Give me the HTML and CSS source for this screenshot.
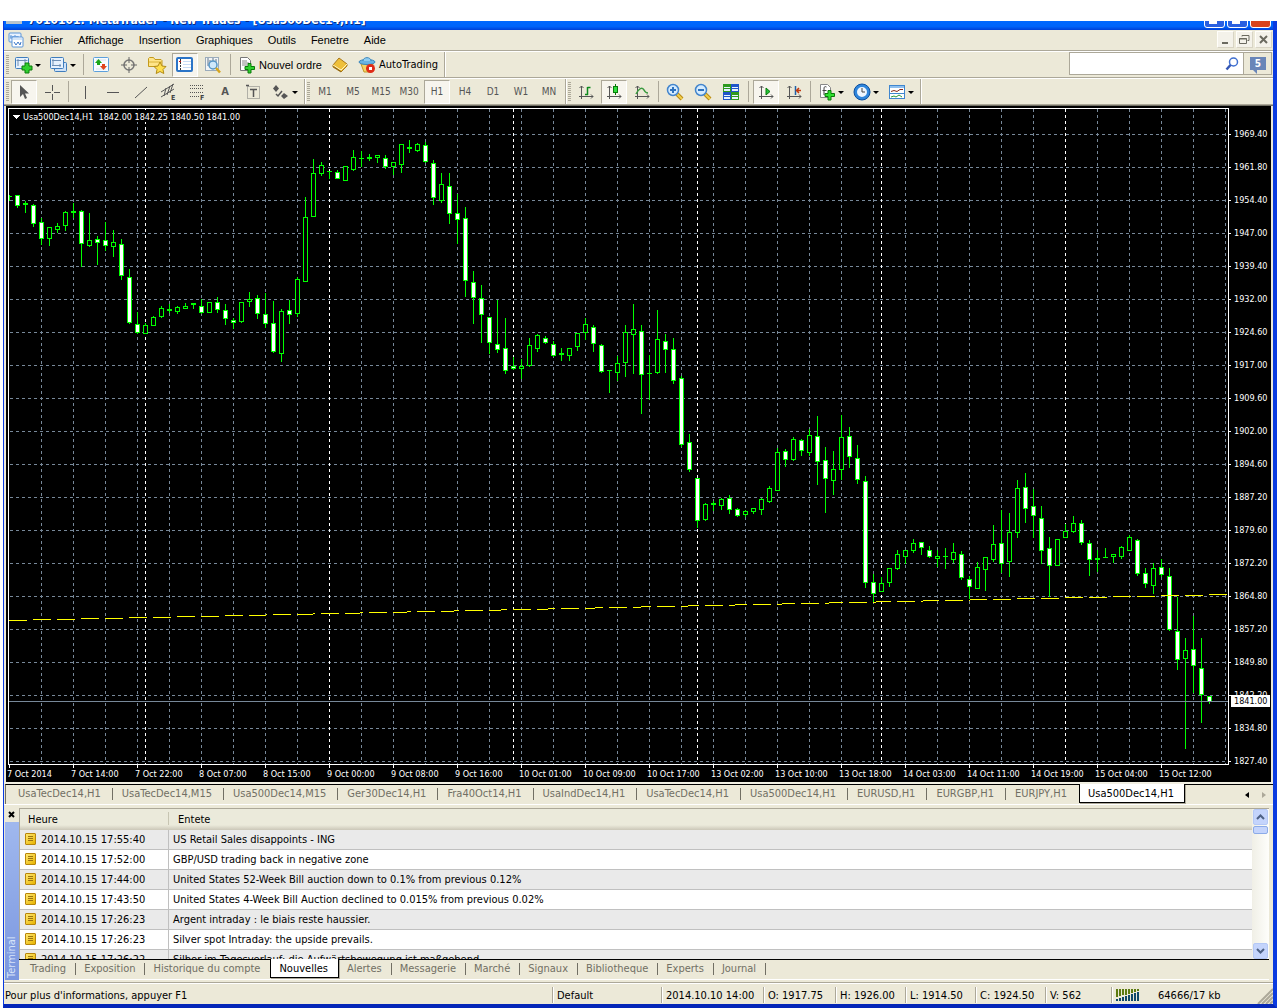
FILE: index.html
```
<!DOCTYPE html>
<html lang="fr">
<head>
    <meta charset="UTF-8">
    <meta name="viewport" content="width=device-width, initial-scale=1.0">
    <title>MetaTrader - [Usa500Dec14,H1]</title>
    <link rel="stylesheet" href="styles.css">
</head>
<body>

<div class="window">
    <header class="titlebar">
        <span class="app-icon"></span>
        <span class="title-text">7010101: MetaTrader - New Trades - [Usa500Dec14,H1]</span>
        <button class="win-btn" aria-label="Réduire"><i></i></button>
        <button class="win-btn" aria-label="Agrandir"><i></i></button>
        <button class="win-btn close" aria-label="Fermer">X</button>
    </header>

    <nav class="menubar">
        <svg class="menu-icon" width="16" height="16" viewBox="0 0 16 16"><rect x="1" y="1" width="12" height="9" rx="1" fill="#e8f2ff" stroke="#5b95d8"/><path d="M3 3v4M5 4v4M7 3v3M9 4v4M2 5h9" stroke="#5b95d8" fill="none"/><rect x="4" y="5" width="11" height="10" rx="1" fill="#fff" stroke="#5b95d8"/><path d="M4 7h11" stroke="#a9cbf2"/><path d="M6 10l2 3 2-3 2 3 1-3" stroke="#3c78c8" fill="none"/></svg>
        <a href="#">Fichier</a>
        <a href="#">Affichage</a>
        <a href="#">Insertion</a>
        <a href="#">Graphiques</a>
        <a href="#">Outils</a>
        <a href="#">Fenetre</a>
        <a href="#">Aide</a>
        <div class="mdi">
            <button aria-label="Réduire"><svg width="16" height="16" viewBox="0 0 16 16"><path d="M5 11h6" stroke="#6b6a60" stroke-width="2"/></svg></button>
            <button aria-label="Restaurer"><svg width="16" height="16" viewBox="0 0 16 16"><path d="M6 4.500V3.500h7v5h-1.500M6 3.500h7" stroke="#6b6a60" fill="none"/><path d="M3.500 6.500h7v5h-7zM3 7h8" stroke="#6b6a60" fill="none"/></svg></button>
            <button aria-label="Fermer"><svg width="16" height="16" viewBox="0 0 16 16"><path d="M5 4l7 7M12 4l-7 7" stroke="#6b6a60" stroke-width="2"/></svg></button>
        </div>
    </nav>

    <div class="toolrow">
        <div class="toolbar">
            <button class="tool drop" aria-label="Nouveau graphique"><svg width="20" height="18" viewBox="0 0 20 18"><rect x="1.500" y="1.500" width="13" height="11" rx="1" fill="#e6f1fd" stroke="#3f7dbd"/><path d="M4 3v7M2.500 4.500h11M11 3v4" stroke="#6f8fb4" fill="none"/><path d="M11 7h4v3h3v4h-3v3h-4v-3H8v-4h3z" fill="#2fd02f" stroke="#0a7a0a"/></svg></button>
            <button class="tool drop" aria-label="Profils"><svg width="20" height="18" viewBox="0 0 20 18"><rect x="5.500" y="6.500" width="12" height="9" rx="1" fill="#cfe2f7" stroke="#3f7dbd"/><rect x="1.500" y="1.500" width="13" height="11" rx="1" fill="#e6f1fd" stroke="#3f7dbd"/><path d="M4 3v7M3 4.500h9M3 9.500h9M11 8v3" stroke="#6f8fb4" fill="none"/></svg></button>
            <span class="sep"></span>
            <button class="tool" aria-label="Cotations"><svg width="18" height="18" viewBox="0 0 18 18"><rect x="1.500" y="1.500" width="15" height="14" rx="1" fill="#f7fbff" stroke="#5ca0dc"/><path d="M4 4h10M4 13h10" stroke="#d7e2ee"/><path d="M6.500 3l3.500 4H8v2H5V7H3z" fill="#19a519"/><path d="M11.500 14l-3.500-4h2V8h3v2h2z" fill="#e0441c"/></svg></button>
            <button class="tool" aria-label="Viseur"><svg width="18" height="18" viewBox="0 0 18 18"><circle cx="9" cy="9" r="5" fill="none" stroke="#777" stroke-width="1.500"/><path d="M9 1v6M9 11v6M1 9h6M11 9h6" stroke="#666"/></svg></button>
            <button class="tool" aria-label="Navigateur"><svg width="20" height="18" viewBox="0 0 20 18"><path d="M1.500 10.500v-8l1-1h4l1.500 2h6l1 1v6z" fill="#ffe58a" stroke="#c39a1c"/><path d="M2 6h13" stroke="#d8b239"/><path d="M13 6l2 4 4 .5-3 3 .8 4L13 15.500 9.200 17.500l.8-4-3-3 4-.5z" fill="#ffdf4f" stroke="#b28a14"/></svg></button>
            <button class="tool pressed" aria-label="Terminal"><svg width="18" height="16" viewBox="0 0 18 16"><rect x="1" y="1" width="15" height="13" rx="1" fill="#fff" stroke="#2b74c7" stroke-width="2"/><path d="M4.500 2v11" stroke="#333" stroke-dasharray="2 1"/><path d="M7 4.500h8M7 7.500h8M7 10.500h8" stroke="#c6dbf5"/><path d="M3 4.500h2" stroke="#d11"/></svg></button>
            <button class="tool" aria-label="Testeur"><svg width="18" height="18" viewBox="0 0 18 18"><rect x="1.500" y="1.500" width="13" height="13" fill="#f3f5f7" stroke="#9aabbb"/><path d="M4 2v8M6 4v7M12 3v6M9 2v4" stroke="#61768b"/><circle cx="9" cy="9" r="4" fill="#cfe8fb" stroke="#5695c6" stroke-width="1.500"/><path d="M12 12l4 4.500" stroke="#d6a51e" stroke-width="2.500"/></svg></button>
            <span class="sep"></span>
            <button class="tool labelled order"><svg width="18" height="18" viewBox="0 0 18 18"><path d="M2.500 1.500h7l3 3v10h-10z" fill="#fff" stroke="#777"/><path d="M4 5h5M4 7h7M4 9h5" stroke="#888"/><path d="M10 7.500h3v3h3.500v3H13v3.500h-3v-3.500H7v-3h3z" fill="#2fd02f" stroke="#0a7a0a"/></svg>Nouvel ordre</button>
            <button class="tool" aria-label="MetaEditor"><svg width="18" height="18" viewBox="0 0 18 18"><path d="M2 9l6-7 8 6v2l-6 6-8-5z" fill="#eebf3a" stroke="#a9781a"/><path d="M2 9l8 5 6-6" stroke="#fff3c0" fill="none"/><path d="M2.500 10.500l7.500 5" stroke="#8a6416"/></svg></button>
            <button class="tool labelled"><svg width="18" height="18" viewBox="0 0 18 18"><path d="M3 8h12l-3 8H6z" fill="#f4d264" stroke="#c29a2a"/><ellipse cx="9" cy="6" rx="8" ry="2.500" fill="#69b3e2" stroke="#3a86bb"/><path d="M5 5c0-4.500 8-4.500 8 0" fill="#8fcdf2" stroke="#3a86bb"/><circle cx="12.500" cy="12.500" r="4.500" fill="#df2b18"/><rect x="11" y="11" width="3" height="3" fill="#fff"/></svg>AutoTrading</button>
        </div>
        <div class="search">
            <input type="text" aria-label="Recherche">
            <svg width="14" height="14" viewBox="0 0 14 14"><circle cx="8.500" cy="5" r="4" fill="#fff" stroke="#3f6fd0" stroke-width="1.500"/><path d="M5.500 8L1.500 12.500" stroke="#3457b5" stroke-width="2.500"/></svg>
        </div>
        <button class="alerts" aria-label="5 messages"><span>5</span></button>
    </div>

    <div class="toolrow second">
        <div class="toolbar">
            <button class="tool pressed" aria-label="Curseur"><svg width="16" height="16" viewBox="0 0 16 16"><path d="M4 1v12l3-3 2 5 2-1-2-4.500h4z" fill="#555"/></svg></button>
            <button class="tool" aria-label="Réticule"><svg width="16" height="16" viewBox="0 0 16 16"><path d="M8.500 1v6M8.500 10v6M1 8.500h6M10 8.500h6" stroke="#555"/></svg></button>
            <span class="sep near"></span>
            <button class="tool" aria-label="Ligne verticale"><svg width="16" height="16" viewBox="0 0 16 16"><path d="M8.500 2v13" stroke="#555"/></svg></button>
            <button class="tool" aria-label="Ligne horizontale"><svg width="16" height="16" viewBox="0 0 16 16"><path d="M2 8.500h12" stroke="#555"/></svg></button>
            <button class="tool" aria-label="Ligne de tendance"><svg width="16" height="16" viewBox="0 0 16 16"><path d="M2 14L14 3" stroke="#555"/></svg></button>
            <button class="tool" aria-label="Canal équidistant"><svg width="18" height="18" viewBox="0 0 18 18"><path d="M1 9L14 1M1 14L14 6M4 13l2-8M7 12l3-9M10 10l3-9" stroke="#555" fill="none"/><text x="11" y="17" class="icon-letter">E</text></svg></button>
            <button class="tool" aria-label="Fibonacci"><svg width="18" height="18" viewBox="0 0 18 18"><path d="M2 2.500h14M2 5.500h14M2 9.500h14M2 13.500h9" stroke="#555" stroke-dasharray="1 1"/><text x="12" y="17" class="icon-letter">F</text></svg></button>
            <button class="tool glyph">A</button>
            <button class="tool" aria-label="Etiquette"><svg width="16" height="16" viewBox="0 0 16 16"><rect x="2.500" y="2.500" width="12" height="12" fill="none" stroke="#777" stroke-dasharray="1 1"/><path d="M5 5.500h7M8.500 5v8M1 1.500h3" stroke="#555" stroke-width="1.500"/></svg></button>
            <button class="tool drop" aria-label="Flèches"><svg width="18" height="16" viewBox="0 0 18 16"><path d="M4 1l3 3.500-3 3.500-3-3.500zM12 9l4 3-4 3-3-3z" fill="#555"/><path d="M4 10l2 2 4-5" stroke="#555" fill="none" stroke-width="1.500"/></svg></button>
        </div>
        <div class="toolbar">
            <button class="tool period">M1</button>
            <button class="tool period">M5</button>
            <button class="tool period">M15</button>
            <button class="tool period">M30</button>
            <button class="tool period pressed">H1</button>
            <button class="tool period">H4</button>
            <button class="tool period">D1</button>
            <button class="tool period">W1</button>
            <button class="tool period">MN</button>
        </div>
        <div class="toolbar">
            <button class="tool" aria-label="Barres"><svg width="16" height="16" viewBox="0 0 16 16"><path d="M3.500 2v13M1 12.500h14M1.500 4l2-2 2 2M13 10.500l2 2-2 2" stroke="#555" fill="none"/><path d="M9.500 3v8M9.500 3.500h3M7 10.500h3" stroke="#0d8a1c" stroke-width="1.500" fill="none"/></svg></button>
            <button class="tool pressed" aria-label="Chandeliers"><svg width="16" height="16" viewBox="0 0 16 16"><path d="M3.500 2v13M1 12.500h14M1.500 4l2-2 2 2M13 10.500l2 2-2 2" stroke="#555" fill="none"/><path d="M9.500 0v11" stroke="#0a7a0a"/><rect x="7.500" y="2.500" width="4" height="6" fill="#2fdf3f" stroke="#0a7a0a"/></svg></button>
            <button class="tool" aria-label="Ligne"><svg width="16" height="16" viewBox="0 0 16 16"><path d="M3.500 2v13M1 12.500h14M1.500 4l2-2 2 2M13 10.500l2 2-2 2" stroke="#555" fill="none"/><path d="M2 10c3-6 6-7 8-4 1 2 3 3 4 3" stroke="#3a9a3f" stroke-width="1.500" fill="none"/></svg></button>
            <span class="sep near"></span>
            <button class="tool" aria-label="Zoom avant"><svg width="18" height="18" viewBox="0 0 18 18"><path d="M11 11l5 5" stroke="#b98a12" stroke-width="4"/><path d="M11 11l5 5" stroke="#f2cf4c" stroke-width="2"/><circle cx="7" cy="7" r="5.500" fill="#d5ecff" stroke="#4385cc" stroke-width="1.500"/><path d="M4 7h6M7 4v6" stroke="#2e73bf" stroke-width="2"/></svg></button>
            <button class="tool" aria-label="Zoom arrière"><svg width="18" height="18" viewBox="0 0 18 18"><path d="M11 11l5 5" stroke="#b98a12" stroke-width="4"/><path d="M11 11l5 5" stroke="#f2cf4c" stroke-width="2"/><circle cx="7" cy="7" r="5.500" fill="#d5ecff" stroke="#4385cc" stroke-width="1.500"/><path d="M4 7h6" stroke="#2e73bf" stroke-width="2"/></svg></button>
            <button class="tool" aria-label="Mosaïque"><svg width="18" height="18" viewBox="0 0 18 18"><path d="M1 1h8v8H1zM9 9h8v8H9z" fill="#2f9a1d"/><path d="M9 1h8v8H9zM1 9h8v8H1z" fill="#1f55c9"/><path d="M2 4h6v1H2zM2 6h6v2H2zM10 4h6v1h-6zM10 6h6v2h-6zM2 12h6v1H2zM2 14h6v2H2zM10 12h6v1h-6zM10 14h6v2h-6z" fill="#e7f3ff"/></svg></button>
            <span class="sep"></span>
            <button class="tool pressed" aria-label="Défilement"><svg width="16" height="16" viewBox="0 0 16 16"><path d="M3.500 2v13M1 12.500h14M1.500 4l2-2 2 2M13 10.500l2 2-2 2" stroke="#555" fill="none"/><path d="M8 4l4 3.500L8 11z" fill="#22c43a" stroke="#0a7a0a"/></svg></button>
            <button class="tool" aria-label="Décalage"><svg width="16" height="16" viewBox="0 0 16 16"><path d="M3.500 2v13M1 12.500h14M1.500 4l2-2 2 2M13 10.500l2 2-2 2" stroke="#555" fill="none"/><path d="M9.500 2v9" stroke="#1f62a8" stroke-width="1.500"/><path d="M15 6.500h-4M13 4l-2.500 2.500L13 9" stroke="#c23a10" stroke-width="1.500" fill="none"/></svg></button>
            <span class="sep near"></span>
            <button class="tool drop" aria-label="Indicateurs"><svg width="18" height="18" viewBox="0 0 18 18"><path d="M2.500 1.500h7l3 3v10h-10z" fill="#fff" stroke="#888"/><path d="M8.500 4c-2-1-2.500 0-2.500 2v6M4.500 7.500h4" stroke="#444" fill="none"/><path d="M10 7.500h3v3h3.500v3H13v3.500h-3v-3.500H7v-3h3z" fill="#2fe02f" stroke="#0a7a0a"/></svg></button>
            <button class="tool drop" aria-label="Périodes"><svg width="18" height="18" viewBox="0 0 18 18"><circle cx="9" cy="9" r="6.500" fill="#eef6ff" stroke="#2f86dc" stroke-width="3"/><circle cx="9" cy="9" r="8" fill="none" stroke="#0d4f9f"/><path d="M9 5v4h3" stroke="#444" fill="none"/></svg></button>
            <button class="tool drop" aria-label="Modèles"><svg width="18" height="16" viewBox="0 0 18 16"><rect x="1.500" y="1.500" width="15" height="13" fill="#fff" stroke="#3f86cf"/><path d="M2 3h14" stroke="#8fc0ef" stroke-width="2"/><path d="M2 9.500h14" stroke="#3f86cf"/><path d="M3 7.500l3-1 3 1 3-2h3" stroke="#8a2a1a" fill="none"/><path d="M3 13l3-1 2 1 3-2 3 2" stroke="#2c9a3a" fill="none"/></svg></button>
        </div>
    </div>

    <main class="chart">
        <svg id="chart" viewBox="6 106 1265 676" role="img" aria-label="Usa500Dec14,H1"></svg>
    </main>

    <nav class="chart-tabs">
        <a href="#">UsaTecDec14,H1</a>
        <a href="#">UsaTecDec14,M15</a>
        <a href="#">Usa500Dec14,M15</a>
        <a href="#">Ger30Dec14,H1</a>
        <a href="#">Fra40Oct14,H1</a>
        <a href="#">UsaIndDec14,H1</a>
        <a href="#">UsaTecDec14,H1</a>
        <a href="#">Usa500Dec14,H1</a>
        <a href="#">EURUSD,H1</a>
        <a href="#">EURGBP,H1</a>
        <a href="#" class="before">EURJPY,H1</a>
        <a href="#" class="active">Usa500Dec14,H1</a>
        <span class="tab-arrows">
            <button class="arrow-left" aria-label="Précédent"></button>
            <button class="arrow-right" aria-label="Suivant"></button>
        </span>
    </nav>

    <section class="terminal">
        <aside class="terminal-side">
            <button aria-label="Fermer"><svg width="7" height="7" viewBox="0 0 7 7"><path d="M1 1l5 5M6 1L1 6" stroke="#000" stroke-width="2"/></svg></button>
            <div class="terminal-name">Terminal</div>
        </aside>
        <div class="terminal-main">
            <div class="news">
                <div class="news-list">
                    <table>
                        <thead>
                            <tr><th class="col-time">Heure</th><th>Entete</th></tr>
                        </thead>
                        <tbody>
                            <tr><td><i class="note"></i>2014.10.15 17:55:40</td><td>US Retail Sales disappoints - ING</td></tr>
                            <tr><td><i class="note"></i>2014.10.15 17:52:00</td><td>GBP/USD trading back in negative zone</td></tr>
                            <tr><td><i class="note"></i>2014.10.15 17:44:00</td><td>United States 52-Week Bill auction down to 0.1% from previous 0.12%</td></tr>
                            <tr><td><i class="note"></i>2014.10.15 17:43:50</td><td>United States 4-Week Bill Auction declined to 0.015% from previous 0.02%</td></tr>
                            <tr><td><i class="note"></i>2014.10.15 17:26:23</td><td>Argent intraday : le biais reste haussier.</td></tr>
                            <tr><td><i class="note"></i>2014.10.15 17:26:23</td><td>Silver spot Intraday: the upside prevails.</td></tr>
                            <tr><td><i class="note"></i>2014.10.15 17:26:22</td><td>Silber im Tagesverlauf: die Aufwärtsbewegung ist maßgebend</td></tr>
                        </tbody>
                    </table>
                </div>
                <div class="scrollbar">
                    <button aria-label="Haut"><svg width="9" height="6" viewBox="0 0 9 6"><path d="M1 5l3.500-3.500L8 5" stroke="#4d6185" stroke-width="2" fill="none"/></svg></button>
                    <span class="thumb"></span>
                    <button class="down" aria-label="Bas"><svg width="9" height="6" viewBox="0 0 9 6"><path d="M1 1l3.500 3.500L8 1" stroke="#4d6185" stroke-width="2" fill="none"/></svg></button>
                </div>
            </div>
            <nav class="terminal-tabs">
                <a href="#">Trading</a>
                <a href="#">Exposition</a>
                <a href="#" class="before">Historique du compte</a>
                <a href="#" class="active">Nouvelles</a>
                <a href="#">Alertes</a>
                <a href="#">Messagerie</a>
                <a href="#">Marché</a>
                <a href="#">Signaux</a>
                <a href="#">Bibliotheque</a>
                <a href="#">Experts</a>
                <a href="#">Journal</a>
            </nav>
        </div>
    </section>

    <footer class="statusbar">
        <span class="hint">Pour plus d'informations, appuyer F1</span>
        <span class="profile">Default</span>
        <span class="date">2014.10.10 14:00</span>
        <span class="open">O: 1917.75</span>
        <span class="price">H: 1926.00</span>
        <span class="price">L: 1914.50</span>
        <span class="price">C: 1924.50</span>
        <span class="volume">V: 562</span>
        <span class="traffic">
            <svg width="24" height="12" viewBox="0 0 24 12"><path d="M1 0v8M4 0v7M7 0v6M10 0v6M13 0v5M16 0v4M19 0v3M22 0v2" stroke="#5c7a10" stroke-width="2"/><path d="M1 10v2M4 9v3M7 8v4M10 7v5M13 6v6M16 5v7M19 4v8M22 3v9" stroke="#10486a" stroke-width="2"/></svg>
            64666/17 kb
        </span>
        <svg class="resize" width="16" height="16" viewBox="0 0 16 16"><path d="M1 16L16 1M5 16L16 5M9 16L16 9M13 16l3-3" stroke="#aca899" stroke-width="2"/></svg>
    </footer>
</div>

<script src="chart.js"></script>
</body>
</html>
```
FILE: styles.css
```
* {
    box-sizing: border-box;
}
body {
    margin: 0;
    padding: 21px 0 0 3px;
    height: 100vh;
    background: #fff;
    color: #000;
    font-family: "DejaVu Sans Condensed", "Liberation Sans", sans-serif;
    font-size: 11px;
}
button {
    margin: 0;
    padding: 0;
    border: 0;
    background: none;
    color: inherit;
    font: inherit;
}
a {
    color: inherit;
    text-decoration: none;
}
svg {
    display: block;
    flex: none;
}
.window {
    display: flex;
    flex-direction: column;
    height: 100%;
    background: #ece9d8;
    border: solid #0a3be0;
    border-width: 0 4px 4px 1px;
    border-bottom-color: #0426b8;
}

/* title bar */
.titlebar {
    display: flex;
    align-items: flex-end;
    height: 9px;
    padding: 0 2px 2px 2px;
    overflow: hidden;
    background: linear-gradient(#0068ff 0, #0064fa 60%, #0040d8);
    color: #fff;
    flex: none;
}
.app-icon {
    width: 16px;
    height: 7px;
    margin-right: 6px;
    background: linear-gradient(#b8c4cc 3px, transparent 3px);
}
.title-text {
    flex: 1;
    font: bold 12px/16px "DejaVu Sans Condensed", sans-serif;
    text-shadow: 1px 1px #0a2a80;
    white-space: nowrap;
}
.win-btn {
    width: 21px;
    height: 21px;
    margin-left: 2px;
    border: 1px solid #fff;
    border-radius: 3px;
    background: #2a60e0;
    color: #fff;
    font-weight: bold;
}
.win-btn i {
    display: block;
    width: 8px;
    height: 3px;
    margin: 10px 0 0 4px;
    background: #fff;
}
.win-btn.close {
    background: #d8431c;
}

/* menu */
.menubar {
    display: flex;
    align-items: center;
    height: 21px;
    padding: 0 1px 1px 4px;
    border-bottom: 1px solid #aca899;
    font-family: "Liberation Sans", sans-serif;
    flex: none;
}
.menu-icon {
    margin-right: 6px;
}
.menubar a {
    margin-right: 15px;
}
.mdi {
    display: flex;
    gap: 2px;
    margin-left: auto;
}
.mdi button {
    width: 17px;
    height: 17px;
    background: #f4f2ea;
    border: 1px solid #fffefa;
    border-right-color: #d8d4c4;
    border-bottom-color: #d8d4c4;
}
.mdi svg {
    margin: -1px;
}

/* toolbars */
.toolrow {
    display: flex;
    height: 27px;
    border-top: 1px solid #fff;
    border-bottom: 1px solid #aca899;
    flex: none;
}
.toolbar {
    display: flex;
    align-items: center;
    padding: 0 2px;
    border-right: 1px solid #aca899;
    box-shadow: 1px 0 #fff;
}
.toolbar::before {
    content: "";
    width: 3px;
    height: 19px;
    margin-right: 1px;
    background: repeating-linear-gradient(#aca899 0 1px, #ece9d8 1px 2px);
}
.tool {
    position: relative;
    display: flex;
    align-items: center;
    justify-content: center;
    width: 26px;
    height: 24px;
    margin: 0 1px;
}
.tool.drop {
    width: 33px;
    padding-right: 8px;
}
.tool.drop::after {
    content: "";
    position: absolute;
    right: 3px;
    top: 11px;
    border: solid transparent;
    border-width: 3px 3px 0;
    border-top-color: #000;
}
.tool.pressed {
    background: #f7f5ee;
    border: 1px solid #aca899;
    border-right-color: #fff;
    border-bottom-color: #fff;
}
.tool.labelled {
    width: auto;
    gap: 3px;
    padding: 0 3px;
    white-space: nowrap;
}
.tool.order {
    font-family: "Liberation Sans", sans-serif;
}
.tool.glyph {
    color: #555;
    font-weight: bold;
}
.tool.period {
    color: #555;
    font-size: 10px;
}
.icon-letter {
    font: bold 7px "DejaVu Sans Condensed", sans-serif;
    fill: #444;
}
.sep {
    width: 1px;
    height: 21px;
    margin: 0 3px;
    background: #aca899;
}
.sep.near {
    margin: 0 2px;
}
.search {
    display: flex;
    align-items: center;
    width: 175px;
    height: 23px;
    margin-left: auto;
    padding-right: 4px;
    border: 1px solid #aca899;
    background: #fff;
}
.search input {
    flex: 1;
    min-width: 0;
    border: 0;
    outline: 0;
}
.alerts {
    width: 29px;
    height: 23px;
    margin: 0 1px 0 -1px;
    padding: 0 6px;
    border: 1px solid #aca899;
}
.alerts span {
    position: relative;
    display: block;
    width: 16px;
    height: 13px;
    background: #6a86b8;
    color: #fff;
    font: bold 10px/13px "DejaVu Sans Condensed", sans-serif;
}
.alerts span::after {
    content: "";
    position: absolute;
    left: 3px;
    top: 13px;
    border-left: 4px solid transparent;
    border-top: 4px solid #6a86b8;
}

/* chart */
.chart {
    padding: 0 2px;
    border-top: 1px solid #716f64;
    border-bottom: 2px solid #f1efe2;
    flex: none;
}
.chart svg {
    width: 100%;
    height: auto;
    background: #000;
    shape-rendering: crispEdges;
}
.chart text {
    font-family: "DejaVu Sans Condensed", sans-serif;
    font-size: 9px;
    fill: #fff;
}
.chart .caption {
    white-space: pre;
}
.chart .last {
    fill: #000;
}

/* chart tabs and terminal tabs */
.chart-tabs,
.terminal-tabs {
    display: flex;
    height: 20px;
    border-top: 1px solid #000;
    color: #716f64;
    white-space: nowrap;
    flex: none;
}
.chart-tabs {
    margin-left: 1px;
    padding-left: 3px;
    border-left: 1px solid #716f64;
}
.chart-tabs a,
.terminal-tabs a {
    display: flex;
    align-items: center;
    height: 17px;
    background: linear-gradient(#716f64, #716f64) right 3px / 1px 12px no-repeat;
}
.chart-tabs a {
    padding: 0 12px 0 9px;
}
.terminal-tabs a {
    padding: 0 10px 0 8px;
}
.chart-tabs a.before,
.terminal-tabs a.before {
    background: none;
}
.chart-tabs a.active,
.terminal-tabs a.active {
    height: 19px;
    margin-top: -1px;
    border: 1px solid #000;
    border-top: 0;
    background: #fff;
    box-shadow: 1px 1px #aca899;
    color: #000;
}
.chart-tabs a.active {
    padding: 0 10px 0 8px;
}
.tab-arrows {
    display: flex;
    align-items: center;
    gap: 13px;
    margin-left: auto;
    padding-right: 7px;
}
.tab-arrows button {
    border: solid transparent;
    border-width: 3px 0;
}
.tab-arrows .arrow-left {
    border-right: 4px solid #000;
}
.tab-arrows .arrow-right {
    border-left: 4px solid #aca899;
}

/* terminal */
.terminal {
    display: flex;
    flex: 1;
    min-height: 120px;
    padding: 3px 4px 0 1px;
    border-top: 1px solid #fff;
    overflow: hidden;
}
.terminal-side {
    display: flex;
    flex-direction: column;
    width: 14px;
}
.terminal-side button {
    padding: 3px 3px 4px;
    height: 14px;
}
.terminal-name {
    flex: 1;
    padding: 2px 0;
    background: linear-gradient(#7a96df, #a0b8ee);
    color: #d8e4f8;
    line-height: 14px;
    writing-mode: vertical-rl;
    transform: rotate(180deg);
}
.terminal-main {
    display: flex;
    flex: 1;
    flex-direction: column;
    min-width: 0;
    border-bottom: 1px solid #fff;
}
.news {
    display: flex;
    flex: 1;
    min-height: 0;
    border: solid #aca899;
    border-width: 1px 0 0 1px;
    background: #fff;
}
.news-list {
    flex: 1;
    overflow: hidden;
}
table {
    width: 100%;
    border-collapse: separate;
    border-spacing: 0;
    table-layout: fixed;
}
th {
    height: 21px;
    padding: 0 8px;
    background: linear-gradient(#ebeadb 16px, #cbc7b8 21px);
    font-weight: normal;
    text-align: left;
}
th + th {
    background: linear-gradient(#c7c5b2, #c7c5b2) left 3px / 1px 13px no-repeat, linear-gradient(#ebeadb 16px, #cbc7b8 21px);
    padding-left: 10px;
}
.col-time {
    width: 148px;
}
td {
    height: 20px;
    padding: 0 4px;
    border-bottom: 1px solid #c0c0c0;
    white-space: nowrap;
}
td:first-child {
    padding-left: 5px;
}
td + td {
    border-left: 1px solid #c0c0c0;
}
tbody tr:nth-child(odd) {
    background: #eaeaea;
}
.note {
    display: inline-block;
    width: 11px;
    height: 12px;
    margin-right: 5px;
    border: 1px solid #b8860b;
    border-radius: 1px;
    background:
        linear-gradient(#9a7410, #9a7410) 2px 2px / 5px 1px no-repeat,
        linear-gradient(#9a7410, #9a7410) 2px 4px / 5px 1px no-repeat,
        linear-gradient(#9a7410, #9a7410) 2px 6px / 5px 1px no-repeat,
        linear-gradient(135deg, #ffe873, #e8b400);
    vertical-align: -2px;
}
.scrollbar {
    display: flex;
    flex-direction: column;
    align-items: center;
    width: 17px;
    background: linear-gradient(to right, #f0efe6, #fefefb);
}
.scrollbar button {
    display: flex;
    align-items: center;
    justify-content: center;
    width: 15px;
    height: 16px;
    border: 1px solid #b4c8f6;
    border-radius: 2px;
    background: #c4d4fc;
}
.scrollbar .thumb {
    width: 15px;
    height: 8px;
    margin-top: 1px;
    border: 1px solid #8cabe8;
    border-radius: 2px;
    background: #c4d4fc;
}
.scrollbar .down {
    margin-top: auto;
}
.terminal-tabs {
    padding-left: 3px;
}

/* status bar */
.statusbar {
    display: flex;
    align-items: center;
    height: 22px;
    margin-top: 2px;
    padding-top: 3px;
    border-top: 1px solid #aca899;
    box-shadow: inset 0 1px #fff;
    white-space: nowrap;
    flex: none;
}
.statusbar span {
    display: flex;
    align-items: center;
    height: 16px;
    padding-left: 4px;
    border-left: 1px solid #aca899;
    box-shadow: inset 1px 0 #fff;
}
.statusbar .hint {
    flex: 1;
    padding-left: 1px;
    border: 0;
    box-shadow: none;
}
.statusbar .profile {
    width: 109px;
}
.statusbar .date {
    width: 102px;
}
.statusbar .open {
    width: 72px;
}
.statusbar .price {
    width: 70px;
}
.statusbar .volume {
    width: 66px;
}
.statusbar .traffic {
    width: 146px;
    gap: 18px;
}
.resize {
    align-self: flex-end;
}
```
FILE: chart.js
```
const SVG_NS = 'http://www.w3.org/2000/svg';
const chart = document.getElementById('chart');

const prices = [
    '1969.40', '1961.80', '1954.40', '1947.00', '1939.40', '1932.00', '1924.60',
    '1917.00', '1909.60', '1902.00', '1894.60', '1887.20', '1879.60', '1872.20',
    '1864.80', '1857.20', '1849.80', '1842.20', '1834.80', '1827.40'
];

const times = [
    '7 Oct 2014', '7 Oct 14:00', '7 Oct 22:00', '8 Oct 07:00', '8 Oct 15:00',
    '9 Oct 00:00', '9 Oct 08:00', '9 Oct 16:00', '10 Oct 01:00', '10 Oct 09:00',
    '10 Oct 17:00', '13 Oct 02:00', '13 Oct 10:00', '13 Oct 18:00', '14 Oct 03:00',
    '14 Oct 11:00', '14 Oct 19:00', '15 Oct 04:00', '15 Oct 12:00'
];

// high, body top, body bottom, low, bear candle
const candles = [
    [195,196,197,201,0], [195,195,206,208,1], [201,203,205,213,0], [204,205,224,227,1],
    [218,222,239,245,1], [227,227,239,246,0], [223,226,230,233,0], [211,212,226,231,0],
    [203,211,213,218,0], [210,211,244,267,1], [213,240,246,247,0], [236,239,243,265,1],
    [222,240,246,251,1], [230,242,247,257,0], [239,244,276,280,1], [269,277,323,324,1],
    [312,324,333,334,1], [323,325,334,334,0], [316,317,326,326,0], [306,308,317,318,0],
    [304,309,311,313,0], [306,307,312,314,0], [303,306,309,309,0], [303,303,305,309,0],
    [299,306,313,314,1], [302,302,313,313,0], [297,302,310,313,1], [304,310,319,325,1],
    [318,320,323,329,1], [302,302,322,323,0], [292,299,302,307,0], [295,298,314,319,1],
    [293,314,324,328,1], [301,323,352,353,1], [309,311,354,362,0], [300,310,315,324,1],
    [277,279,314,317,0], [197,217,282,282,0], [159,173,217,217,0], [162,165,174,176,0],
    [171,171,172,179,0], [170,172,179,179,1], [166,166,181,181,0], [150,157,170,171,0],
    [151,158,159,167,0], [154,157,159,161,0], [155,155,158,163,0], [155,158,167,169,1],
    [162,162,167,175,0], [144,144,165,173,0], [140,147,149,153,0], [143,144,151,152,0],
    [142,145,162,163,1], [160,163,198,205,1], [173,184,201,203,0], [173,186,214,224,1],
    [194,213,220,244,1], [207,218,281,297,1], [271,282,298,324,1], [285,298,315,343,1],
    [317,317,343,354,1], [300,344,350,353,1], [318,348,371,374,1], [357,366,369,370,1],
    [359,366,369,379,0], [338,345,366,367,0], [334,335,349,352,0], [336,338,343,344,1],
    [341,344,356,357,1], [348,353,355,361,0], [348,348,356,361,0], [333,333,347,351,0],
    [318,324,333,340,0], [325,327,344,352,1], [344,345,372,373,1], [370,370,371,393,0],
    [356,363,373,381,0], [325,332,363,377,0], [304,329,335,374,0], [325,331,375,414,1],
    [355,373,374,400,0], [310,339,373,374,0], [334,341,350,373,1], [338,349,381,384,1],
    [376,378,445,447,1], [434,442,470,472,1], [478,478,521,528,1], [503,504,520,521,0],
    [501,503,505,511,0], [498,499,506,510,0], [495,498,510,514,1], [508,509,516,517,1],
    [510,511,515,517,0], [508,508,512,514,0], [498,499,510,515,0], [486,488,502,503,0],
    [448,452,491,491,0], [449,451,460,467,1], [437,439,460,461,0], [439,440,451,456,1],
    [429,435,453,456,0], [416,436,462,485,1], [447,460,479,513,1], [451,469,481,495,0],
    [415,437,470,480,0], [427,436,457,468,1], [445,458,480,484,1], [476,481,583,588,1],
    [574,582,594,602,1], [577,583,592,592,0], [568,568,583,587,0], [550,554,569,570,0],
    [550,550,557,564,0], [539,543,551,553,0], [542,542,548,555,1], [546,550,557,558,1],
    [550,556,559,567,0], [548,556,557,569,0], [543,552,560,563,0], [551,554,578,580,1],
    [576,579,587,599,1], [562,567,589,589,0], [557,557,570,591,0], [525,544,560,562,0],
    [510,543,564,573,1], [513,532,562,577,0], [480,488,533,538,0], [473,487,509,523,1],
    [489,506,516,538,1], [506,518,551,564,1], [537,548,566,597,1], [539,539,566,566,0],
    [524,531,538,538,0], [516,523,532,533,0], [520,523,543,545,1], [540,543,560,576,1],
    [550,558,560,572,0], [548,557,558,558,0], [554,554,557,563,0], [546,547,557,559,0],
    [535,537,551,551,0], [539,540,574,576,1], [568,573,584,588,1], [563,568,586,594,0],
    [559,567,575,577,1], [568,576,630,631,1], [597,631,660,670,1], [638,650,659,749,0],
    [616,649,666,693,1], [638,668,695,723,1], [696,696,702,704,1]
];

function add(tag, attrs, text) {
    const el = document.createElementNS(SVG_NS, tag);
    for (const key in attrs) {
        el.setAttribute(key, attrs[key]);
    }
    if (text) {
        el.textContent = text;
    }
    chart.appendChild(el);
}

function line(x1, y1, x2, y2, stroke, dash) {
    add('line', { x1, y1, x2, y2, stroke, 'stroke-dasharray': dash || 'none' });
}

function rect(x, y, width, height, fill) {
    add('rect', { x, y, width, height, fill });
}

// grid
for (let x = 41; x < 1228; x += 32) {
    line(x + 0.5, 109, x + 0.5, 764, '#778899', '3 3');
}
for (let i = 0; i < prices.length; i++) {
    const y = 134 + i * 33;
    line(10, y + 0.5, 1228, y + 0.5, '#778899', '3 3');
    rect(1229, y, 2, 1, '#fff');
    add('text', { x: 1234, y: y + 3 }, prices[i]);
}

// day separators
for (let x = 145; x < 1228; x += 184) {
    line(x + 0.5, 109, x + 0.5, 764, '#fff', '3 3');
}

// candles
candles.forEach(function (c, i) {
    const x = 9 + i * 8;
    rect(x, c[0], 1, c[3] - c[0], '#00ff00');
    rect(x - 2, c[1], 5, c[2] - c[1], '#00ff00');
    if (c[2] - c[1] > 2) {
        rect(x - 1, c[1] + 1, 3, c[2] - c[1] - 2, c[4] ? '#fff' : '#000');
    }
});

// moving average
line(9, 620.5, 1228, 594.5, '#ffff00', '18 6');

// last price
rect(9, 701, 1219, 1, '#778899');
rect(1231, 695, 39, 12, '#fff');
add('text', { x: 1234, y: 704, class: 'last' }, '1841.00');

// left padding and frame
rect(6, 109, 2, 655, '#000');
rect(8, 108, 1221, 1, '#fff');
rect(8, 108, 1, 657, '#fff');
rect(1228, 108, 1, 657, '#fff');
rect(8, 764, 1221, 1, '#fff');

times.forEach(function (label, i) {
    rect(9 + i * 64, 765, 1, 3, '#fff');
    add('text', { x: 7 + i * 64, y: 777 }, label);
});

// caption
rect(10, 110, 235, 12, '#000');
add('path', { d: 'M12 115h8l-4 4z', fill: '#fff' });
add('text', { x: 23, y: 120, class: 'caption' }, 'Usa500Dec14,H1  1842.00 1842.25 1840.50 1841.00');
```
